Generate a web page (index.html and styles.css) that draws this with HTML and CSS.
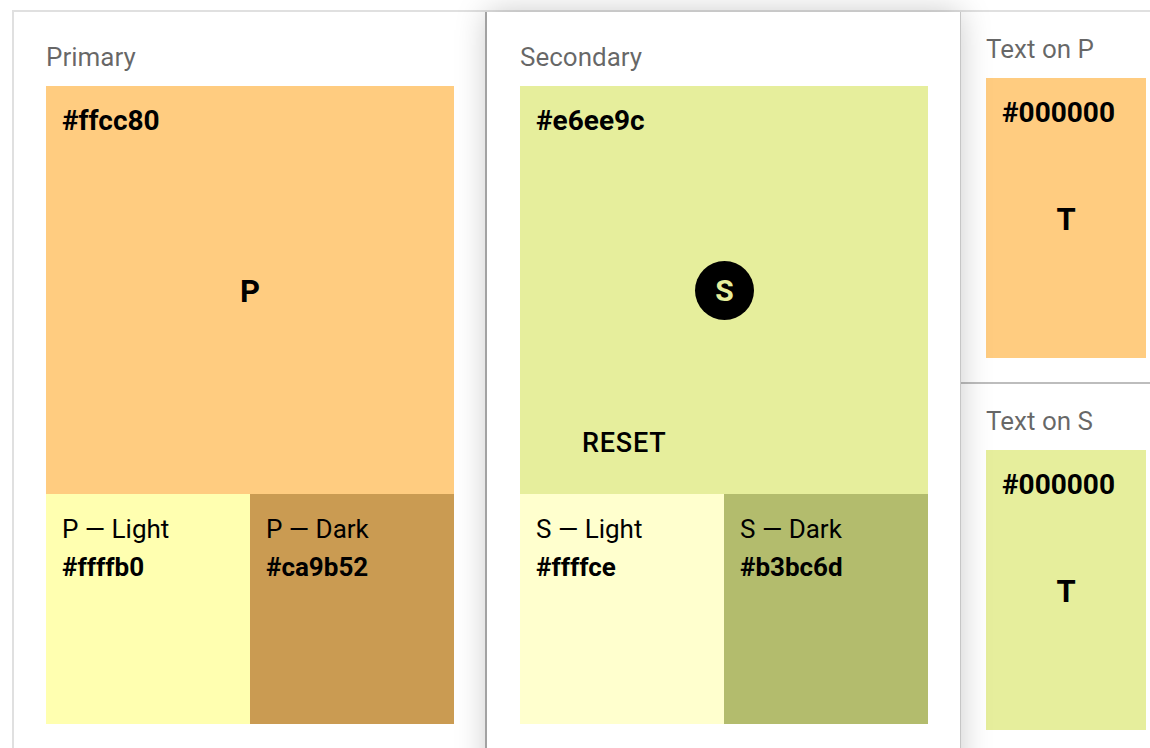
FILE: index.html
```html
<!DOCTYPE html>
<html>
<head>
<meta charset="utf-8">
<link rel="stylesheet" href="styles.css">
</head>
<body>
<div class="board">
  <section class="col col-primary">
    <div class="label">Primary</div>
    <div class="swatch main bg-p">
      <div class="hex">#ffcc80</div>
      <div class="center-letter">P</div>
    </div>
    <div class="variants">
      <div class="swatch variant bg-pl">
        <div class="vname">P — Light</div>
        <div class="hex">#ffffb0</div>
      </div>
      <div class="swatch variant bg-pd">
        <div class="vname">P — Dark</div>
        <div class="hex">#ca9b52</div>
      </div>
    </div>
  </section>

  <section class="col col-secondary">
    <div class="label">Secondary</div>
    <div class="swatch main bg-s">
      <div class="hex">#e6ee9c</div>
      <div class="fab">S</div>
      <button class="reset">RESET</button>
    </div>
    <div class="variants">
      <div class="swatch variant bg-sl">
        <div class="vname">S — Light</div>
        <div class="hex">#ffffce</div>
      </div>
      <div class="swatch variant bg-sd">
        <div class="vname">S — Dark</div>
        <div class="hex">#b3bc6d</div>
      </div>
    </div>
  </section>

  <section class="col col-text">
    <div class="text-card">
      <div class="label">Text on P</div>
      <div class="swatch tall bg-p">
        <div class="hex">#000000</div>
        <div class="center-letter">T</div>
      </div>
    </div>
    <div class="text-card">
      <div class="label">Text on S</div>
      <div class="swatch tall bg-s">
        <div class="hex">#000000</div>
        <div class="center-letter">T</div>
      </div>
    </div>
  </section>
</div>
</body>
</html>
```

FILE: styles.css
```css
html, body {
  margin: 0;
  padding: 0;
  background: #ffffff;
  overflow: hidden;
  width: 1150px;
  height: 748px;
}

body {
  font-family: Roboto, "Liberation Sans", sans-serif;
  color: #000;
}

.board {
  margin: 10px 0 0 12px;
  border-top: 2px solid #e0e0e0;
  border-left: 2px solid #e0e0e0;
  display: flex;
  align-items: stretch;
  width: 1200px;
  height: 800px;
}

.col {
  box-sizing: border-box;
  background: #fff;
}

.col-primary {
  width: 473px;
  padding: 29px 33px 0 32px;
}

.col-secondary {
  width: 473px;
  padding: 29px 32px 0 33px;
  position: relative;
  z-index: 2;
  box-shadow: -2px 0 0 #a2a2a2, 1px 0 0 #c6c6c6, 0 0 30px rgba(0, 0, 0, 0.22);
}

.col-text {
  width: 230px;
  display: flex;
  flex-direction: column;
}

.label {
  font-size: 26px;
  line-height: 32px;
  color: rgba(0, 0, 0, 0.6);
  margin-bottom: 13px;
  white-space: nowrap;
}

.swatch {
  box-sizing: border-box;
  padding: 0 16px;
  font-size: 26px;
  line-height: 37px;
}

.main {
  width: 408px;
  height: 408px;
  display: grid;
  grid-template-columns: 1fr;
  grid-template-rows: 1fr;
}

.main > *, .tall > * {
  grid-area: 1 / 1;
}

.hex {
  font-weight: 700;
  align-self: start;
}

.main > .hex, .tall > .hex {
  padding-top: 16px;
  font-size: 28px;
}

.center-letter {
  font-weight: 700;
  font-size: 31px;
  place-self: center;
  line-height: 36px;
  padding-top: 3px;
}

.fab {
  place-self: center;
  width: 59px;
  height: 59px;
  border-radius: 50%;
  background: #000;
  color: #e6ee9c;
  font-weight: 700;
  font-size: 30px;
  display: flex;
  align-items: center;
  justify-content: center;
  margin-left: 1px;
}

.reset {
  align-self: end;
  justify-self: start;
  margin: 0 0 35px 46px;
  padding: 0;
  border: 0;
  background: transparent;
  font-family: Roboto, "Liberation Sans", sans-serif;
  font-size: 27px;
  font-weight: 500;
  letter-spacing: 0.03em;
  line-height: 32px;
  color: #000;
}

.variants {
  display: flex;
  width: 408px;
}

.variant {
  width: 204px;
  height: 230px;
  padding-top: 17px;
}

.variant .hex {
  margin-top: 1px;
}

.tall {
  width: 160px;
  height: 280px;
  display: grid;
  grid-template-columns: 1fr;
  grid-template-rows: 1fr;
}

.text-card {
  padding: 21px 24px 24px 26px;
  border-bottom: 2px solid #bdbdbd;
}

.bg-p { background: #ffcc80; }
.bg-pl { background: #ffffb0; }
.bg-pd { background: #ca9b52; }
.bg-s { background: #e6ee9c; }
.bg-sl { background: #ffffce; }
.bg-sd { background: #b3bc6d; }
```
